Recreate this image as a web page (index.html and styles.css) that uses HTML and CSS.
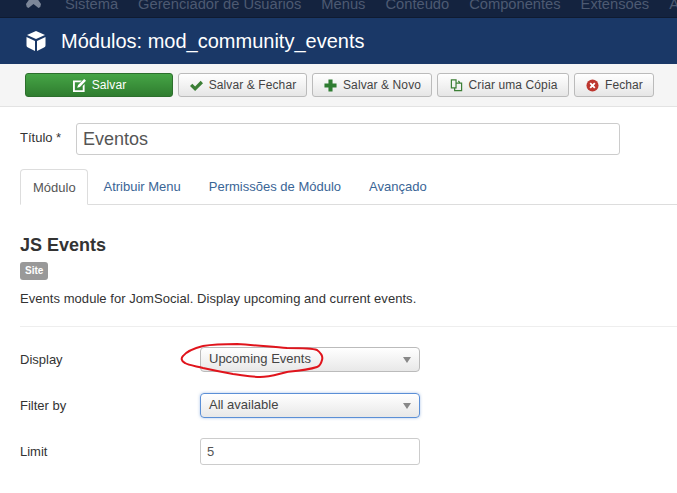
FILE: index.html
```html
<!DOCTYPE html>
<html lang="en">
<head>
    <meta charset="UTF-8">
    <title>Módulos: mod_community_events</title>
    <link rel="stylesheet" href="styles.css">
</head>
<body>
    <nav class="topnav">
        <svg class="joomla-logo" viewBox="0 0 16 16"><path d="M8 4 L10.5 1 Q13 0 14 2.5 L12 6 L15.5 11 Q15.5 14 13 15 L8 11 L3 15 Q0.5 14 0.5 11 L4 6 L2 2.5 Q3 0 5.5 1 Z" fill="#7c8698"/></svg>
        <a>Sistema</a>
        <a>Gerenciador de Usuários</a>
        <a>Menus</a>
        <a>Conteúdo</a>
        <a>Componentes</a>
        <a>Extensões</a>
        <a>Ajuda</a>
    </nav>
    <header class="titlebar">
        <svg class="cube-icon" viewBox="0 0 20 20"><path d="M10 0 L19 4 L10 8 L1 4 Z M0.5 6 L9 10 L9 20 L2 16.5 Q0.5 15.8 0.5 14.5 Z M19.5 6 L11 10 L11 20 L18 16.5 Q19.5 15.8 19.5 14.5 Z" fill="#fff"/></svg>
        <h1>Módulos: mod_community_events</h1>
    </header>
    <div class="toolbar">
        <button class="btn btn-save">
            <svg class="icon" viewBox="0 0 14 14"><path d="M0 1.5 H9.5 L7.5 3.5 H2 V12 H10.5 V7.5 L12.5 5.5 V14 H0 Z M12 0 L14 2 L7.5 8.5 L4.5 9.5 L5.5 6.5 Z" fill="#fff"/></svg>
            Salvar
        </button>
        <button class="btn btn-close-save">
            <svg class="icon" viewBox="0 0 14 14"><path d="M0 7.5 L2.5 5 L5.5 8 L11.5 2 L14 4.5 L5.5 13 Z" fill="#3c7f36"/></svg>
            Salvar &amp; Fechar
        </button>
        <button class="btn btn-new">
            <svg class="icon" viewBox="0 0 14 14"><path d="M4.8 0.5 H9.2 V4.8 H13.5 V9.2 H9.2 V13.5 H4.8 V9.2 H0.5 V4.8 H4.8 Z" fill="#2f7d32"/></svg>
            Salvar &amp; Novo
        </button>
        <button class="btn btn-copy">
            <svg class="icon" viewBox="0 0 14 14"><path d="M1.5 1 H6.5 V9.5 H1.5 Z M6.5 4.5 H12.5 V12.5 H5 V9.5 M9 2 L10.5 4" fill="none" stroke="#3c7f36" stroke-width="1.3"/></svg>
            Criar uma Cópia
        </button>
        <button class="btn btn-close">
            <svg class="icon" viewBox="0 0 14 14"><circle cx="7" cy="7" r="6.5" fill="#bd362f"/><path d="M4.5 4.5 L9.5 9.5 M9.5 4.5 L4.5 9.5" stroke="#fff" stroke-width="2"/></svg>
            Fechar
        </button>
    </div>
    <main class="content">
        <div class="title-row">
            <label class="title-label">Título *</label>
            <input class="title-input" type="text" value="Eventos">
        </div>
        <ul class="tabs">
            <li class="tab active">Módulo</li>
            <li class="tab">Atribuir Menu</li>
            <li class="tab">Permissões de Módulo</li>
            <li class="tab">Avançado</li>
        </ul>
        <h2 class="module-name">JS Events</h2>
        <span class="badge">Site</span>
        <p class="module-desc">Events module for JomSocial. Display upcoming and current events.</p>
        <hr class="divider">
        <div class="field">
            <label>Display</label>
            <div class="select">Upcoming Events</div>
        </div>
        <div class="field">
            <label>Filter by</label>
            <div class="select focused">All available</div>
        </div>
        <div class="field">
            <label>Limit</label>
            <input class="text-input" type="text" value="5">
        </div>
    </main>
    <!-- red marker drawn on top of the screenshot -->
    <svg class="scribble" viewBox="180 342 146 38"><path d="M203 346 C215 344 225 344 237 344 C255 345 272 347 287 348 C300 348 312 348 317 350 C321 353 323 357 322 360 C321 364 320 366 317 367 C308 370 297 371 287 372 C278 374 270 377 260 377 C250 377 242 375 233 374 C222 372 212 370 203 368 C195 366 188 365 185 363 C181 361 181 358 183 356 C187 351 195 348 203 346" fill="none" stroke="#e0141c" stroke-width="2"/></svg>
</body>
</html>
```
FILE: styles.css
```css
* {
    box-sizing: border-box;
}
body {
    margin: 0;
    height: 493px;
    overflow: hidden;
    background-color: #fff;
    font-family: "Liberation Sans", Arial, sans-serif;
    font-size: 13px;
    color: #333;
}
.topnav {
    display: flex;
    align-items: flex-end;
    gap: 20px;
    height: 18px;
    padding: 0 0 2px 25px;
    overflow: hidden;
    background-color: #14233f;
    border-bottom: 1px solid #0f1b31;
    white-space: nowrap;
}
.topnav a {
    flex-shrink: 0;
    color: #4d5a72;
    font-size: 14.7px;
    line-height: 22px;
}
.joomla-logo {
    flex-shrink: 0;
    width: 17px;
    height: 16px;
    margin-right: 3px;
    margin-bottom: 6px;
}
.titlebar {
    display: flex;
    align-items: center;
    height: 46px;
    padding-left: 26px;
    background-color: #1a3867;
    color: #fff;
}
.cube-icon {
    width: 20px;
    height: 20px;
    margin-right: 15px;
}
.titlebar h1 {
    margin: 0;
    font-size: 20px;
    font-weight: 400;
}
.toolbar {
    display: flex;
    gap: 5px;
    height: 43px;
    padding: 9px 0 0 25px;
    background-color: #f5f5f5;
    border-bottom: 1px solid #e3e3e3;
}
.btn {
    display: flex;
    align-items: center;
    justify-content: center;
    gap: 6px;
    height: 24px;
    padding: 0 0 0 1px;
    font-family: inherit;
    font-size: 12px;
    letter-spacing: 0.1px;
    color: #444;
    background: linear-gradient(#fff, #e6e6e6);
    border: 1px solid #bbb;
    border-radius: 3px;
}
.icon {
    width: 13px;
    height: 13px;
}
.btn-save {
    width: 148px;
    color: #fff;
    background: linear-gradient(#46a546, #2f7d2f);
    border-color: #2c6f2c;
}
.btn-close-save { width: 129px; }
.btn-new { width: 120px; }
.btn-copy { width: 132px; }
.btn-close { width: 80px; }
.content {
    padding: 16px 0 0 20px;
}
.title-row {
    display: flex;
    align-items: center;
    height: 32px;
}
.title-label {
    width: 56px;
    margin-top: -4px;
    font-size: 13px;
}
.title-input {
    width: 544px;
    height: 32px;
    padding: 0 6px;
    font-family: inherit;
    font-size: 18px;
    color: #555;
    border: 1px solid #ccc;
    border-radius: 3px;
}
.tabs {
    display: flex;
    height: 36px;
    margin: 14px 0 0;
    padding: 0;
    list-style: none;
    border-bottom: 1px solid #ddd;
}
.tab {
    padding: 10px 13.5px 0;
    margin-left: 1px;
    color: #3a6596;
    font-size: 13px;
    line-height: 16px;
}
.tab.active {
    width: 68px;
    height: 36px;
    margin: 0 1px 0 0;
    padding: 10px 12px 0 12px;
    color: #555;
    background-color: #fff;
    border: 1px solid #ddd;
    border-bottom-color: #fff;
    border-radius: 4px 4px 0 0;
}
.module-name {
    margin: 30px 0 0;
    font-size: 18px;
    line-height: 20px;
    font-weight: 700;
    color: #333;
}
.badge {
    display: inline-block;
    margin-top: 7px;
    padding: 0 5px;
    font-size: 10px;
    line-height: 18px;
    font-weight: 700;
    color: #fff;
    background-color: #999;
    border-radius: 3px;
}
.module-desc {
    margin: 10px 0 0;
    font-size: 13px;
    line-height: 18px;
    letter-spacing: 0.05px;
}
.divider {
    margin: 18px 0 0;
    border: 0;
    border-top: 1px solid #eee;
}
.field {
    display: flex;
    align-items: center;
    height: 26px;
    margin-top: 20px;
}
.divider + .field {
    margin-top: 19px;
}
.field label {
    width: 180px;
    font-size: 13px;
}
.select {
    position: relative;
    width: 220px;
    height: 25px;
    padding-left: 8px;
    font-size: 13px;
    line-height: 22px;
    color: #444;
    background: linear-gradient(#fff, #e8e8e8);
    border: 1px solid #bbb;
    border-radius: 4px;
}
.select::after {
    content: "";
    position: absolute;
    top: 9px;
    right: 8px;
    border-style: solid;
    border-width: 6px 4px 0;
    border-color: #888 transparent transparent;
}
.select.focused {
    border-color: #5b8fd6;
    box-shadow: 0 0 3px rgba(82, 134, 210, 0.5);
}
.text-input {
    width: 220px;
    height: 27px;
    padding: 0 6px;
    font-family: inherit;
    font-size: 13px;
    color: #555;
    border: 1px solid #ccc;
    border-radius: 3px;
}
.scribble {
    position: absolute;
    left: 180px;
    top: 342px;
    width: 146px;
    height: 38px;
}
```
